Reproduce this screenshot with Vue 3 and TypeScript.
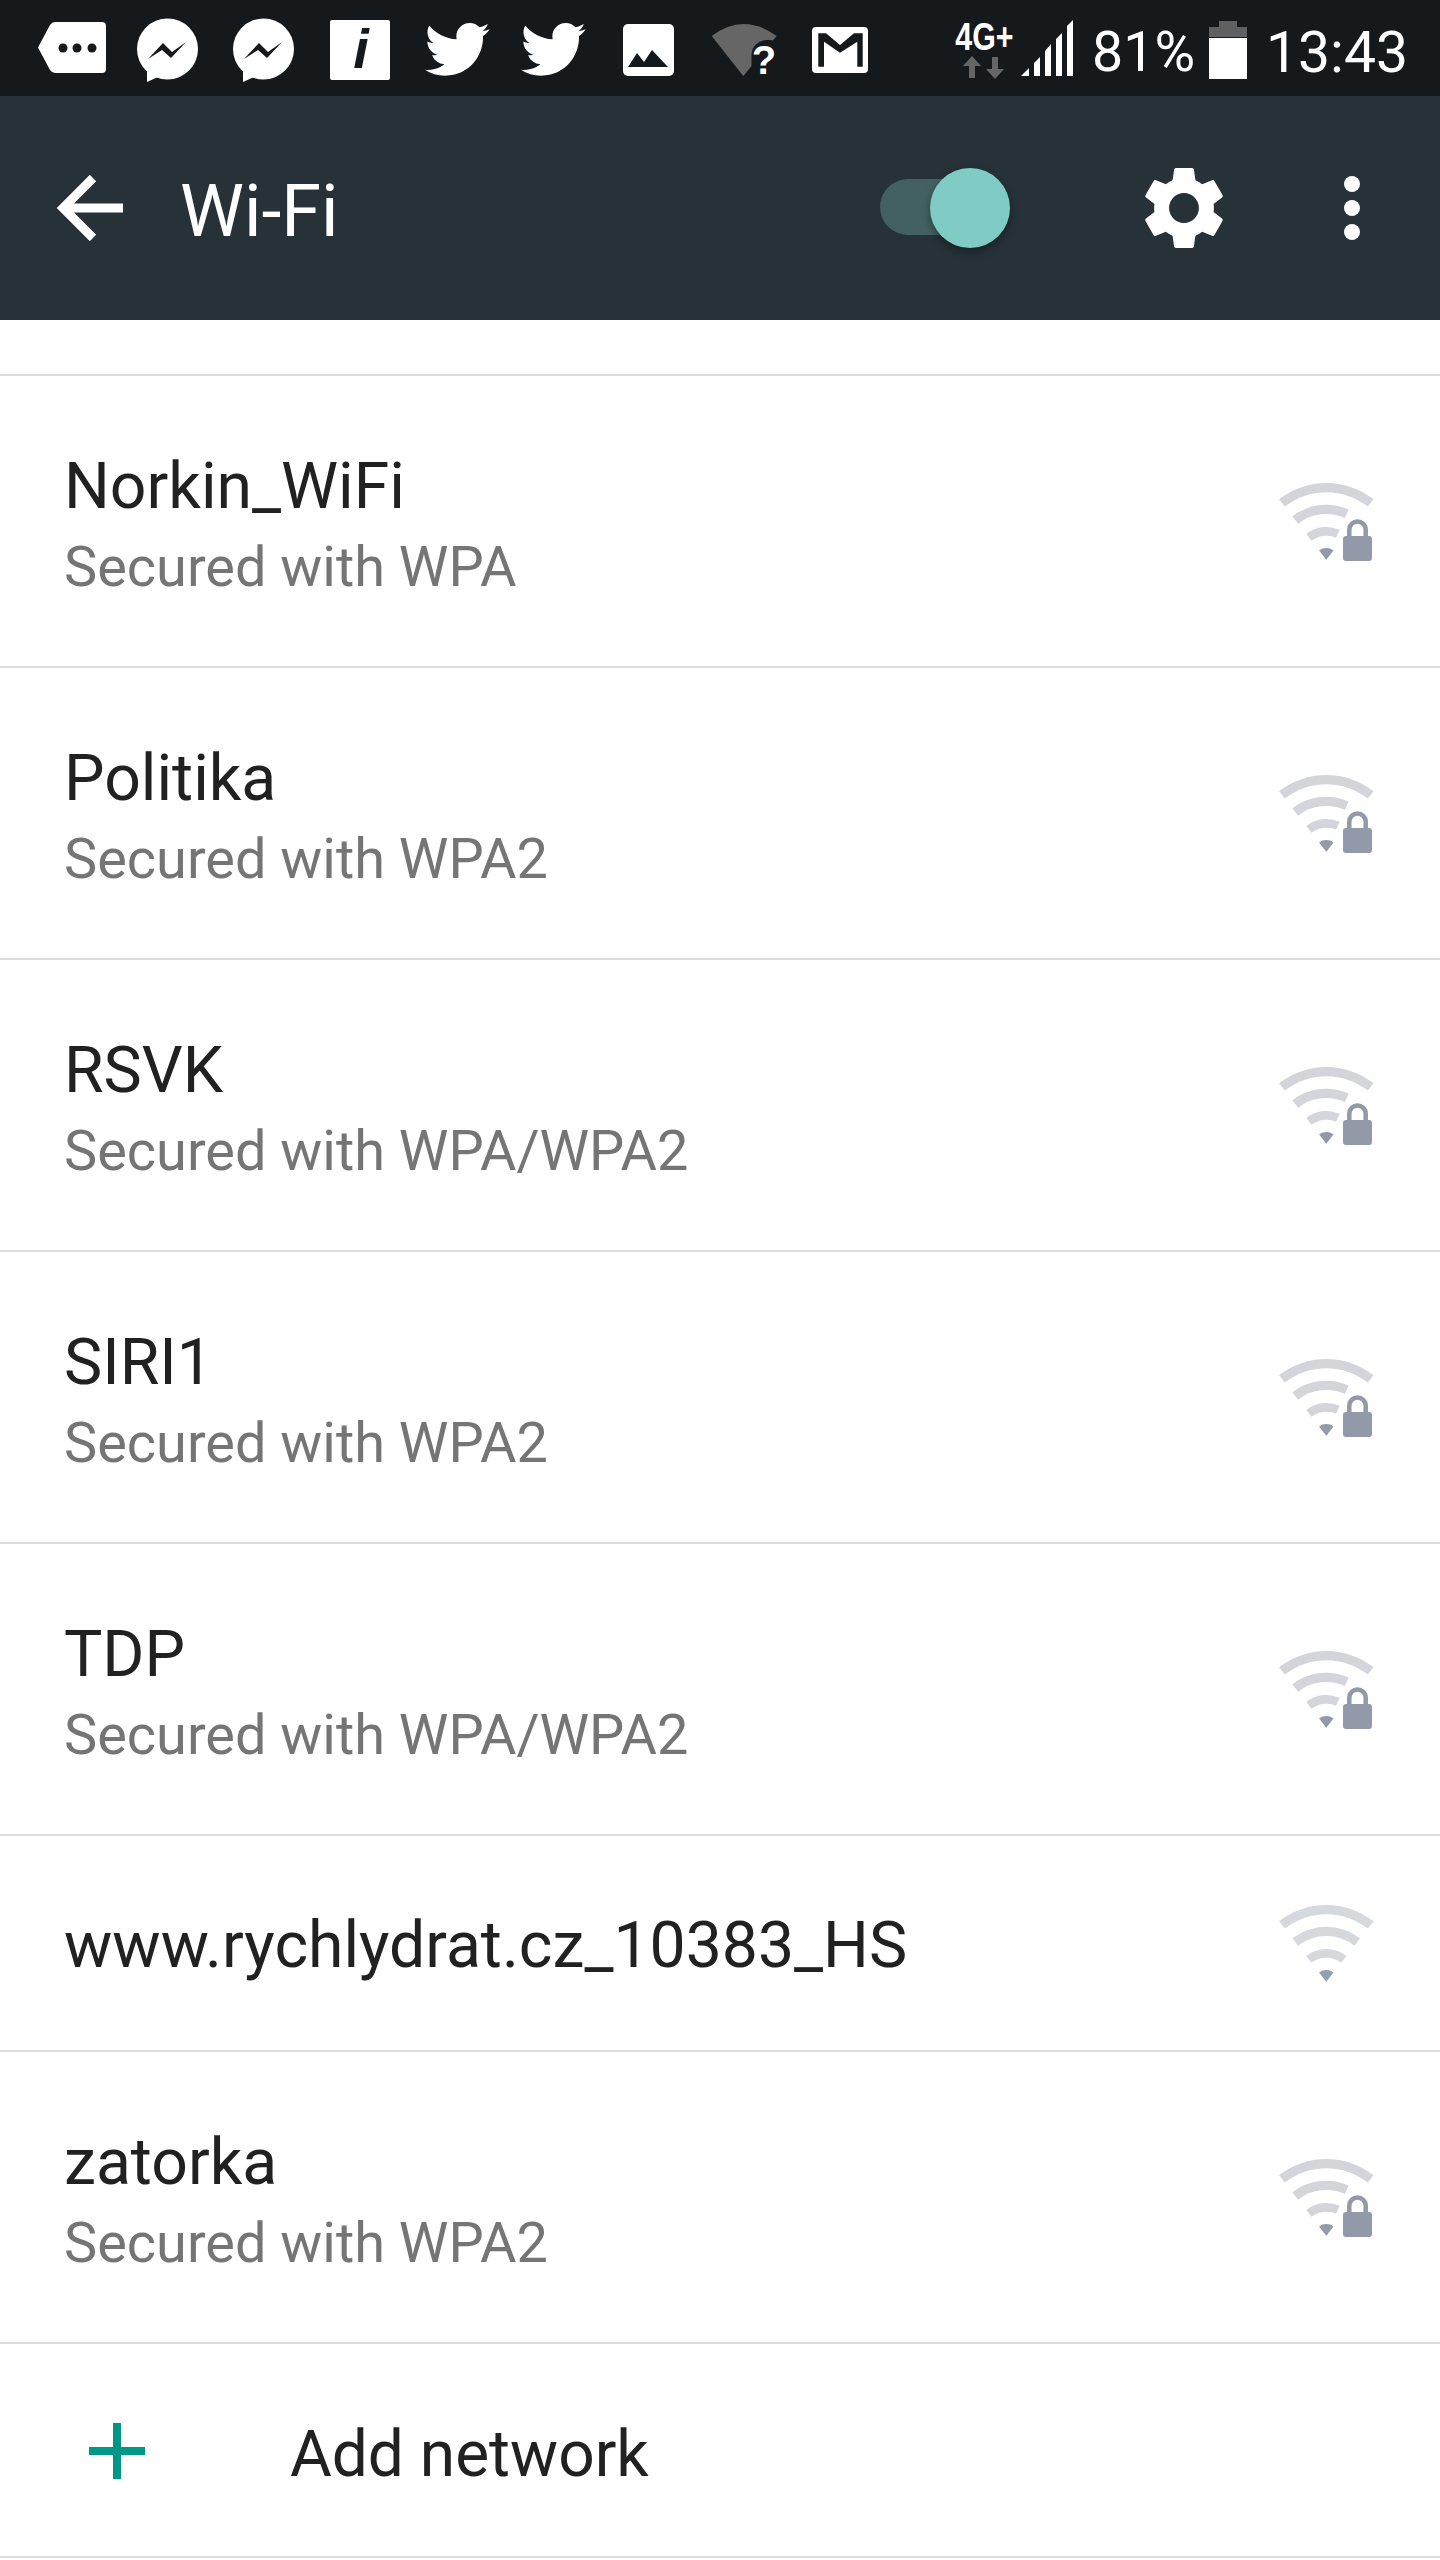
<template>
  <div class="screen">
    <div class="status-bar">
      <div class="notifications">
        <svg class="cell" viewBox="0 0 96 96">
          <path fill="#fff" d="M31 22H78q4 0 4 4V69q0 4-4 4H31q-3 0-5-3L14 47.5 26 25q2-3 5-3z" />
          <circle cx="39" cy="48" r="4.5" :fill="barColor" />
          <circle cx="53" cy="48" r="4.5" :fill="barColor" />
          <circle cx="68" cy="48" r="4.5" :fill="barColor" />
        </svg>
        <svg v-for="n in 2" :key="'m' + n" class="cell" viewBox="0 0 96 96">
          <circle cx="47.5" cy="49" r="30.5" fill="#fff" />
          <path fill="#fff" d="M27 68V82L38 77z" />
          <path :fill="barColor" d="M28 59 43 43 52 52 66 42 51 58 42 50z" />
        </svg>
        <svg class="cell" viewBox="0 0 96 96">
          <rect x="18" y="20" width="60" height="60" rx="2" fill="#fff" />
          <text x="49" y="68" text-anchor="middle" class="info-glyph" :fill="barColor">i</text>
        </svg>
        <svg v-for="n in 2" :key="'t' + n" class="cell" viewBox="0 0 96 96">
          <path fill="#fff" transform="translate(12 10.6) scale(3.1)" :d="twitterPath" />
        </svg>
        <svg class="cell" viewBox="0 0 96 96">
          <rect x="23" y="24" width="51" height="52" rx="5" fill="#fff" />
          <path :fill="barColor" d="M28 67 37 53 44 62 52 50 68 67z" />
        </svg>
        <svg class="cell" viewBox="0 0 96 96">
          <path fill="#666" d="M15.7 36Q47.3 12 80.7 36L47.3 76z" />
          <rect x="55.5" y="40" width="32" height="42" rx="15" :fill="barColor" />
          <text x="68" y="74" text-anchor="middle" class="question">?</text>
        </svg>
        <svg class="cell" viewBox="0 0 96 96">
          <rect x="20" y="27" width="56" height="46" rx="4" fill="#fff" />
          <path :fill="barColor" d="M26.3 33.3H34L48 45 62 33.3H70.7V66.7H65.3V41.7L48 52.7 32 41.7V66.7H26.3z" />
        </svg>
      </div>

      <div class="system">
        <div class="network-type">
          <span class="lte">4G+</span>
          <svg class="arrows" width="42" height="23" viewBox="0 0 42 23">
            <path fill="#666" d="M9 0 18 10H12V22H6V10H0z" />
            <path fill="#666" d="M32 23 23 13H29V1H35V13H41z" />
          </svg>
        </div>
        <svg class="signal" width="52" height="56" viewBox="0 0 52 56">
          <path fill="#fff" d="M0 56 8 48V56z" />
          <path fill="#fff" d="M13 43 19 37V56H13z" />
          <path fill="#fff" d="M24 31 30 24V56H24z" />
          <path fill="#fff" d="M35 19 41 13V56H35z" />
          <path fill="#fff" d="M46 6 52 0V56H46z" />
        </svg>
        <span class="status-text percent">81%</span>
        <svg class="battery" width="38" height="58" viewBox="0 0 38 58">
          <path fill="#5e6062" d="M10 0H28V6H38V16H0V6H10z" />
          <rect y="17" width="38" height="41" fill="#fff" />
        </svg>
        <span class="status-text clock">13:43</span>
      </div>
    </div>

    <div class="toolbar">
      <svg class="back" width="66" height="66" viewBox="0 0 66 66">
        <path d="M66 33H6M36 3 6 33 36 63" fill="none" stroke="#fff" stroke-width="9" />
      </svg>
      <h1 class="title">Wi-Fi</h1>
      <div class="toggle">
        <div class="track"></div>
        <div class="thumb"></div>
      </div>
      <svg class="gear" width="78" height="80" viewBox="2.6 2.4 18.8 19.2" preserveAspectRatio="none">
        <path fill="#fff" :d="gearPath" />
      </svg>
      <div class="more">
        <span v-for="n in 3" :key="n" class="dot"></span>
      </div>
    </div>

    <div class="list">
      <div v-for="item in networks" :key="item.name" class="row" :class="{ compact: !item.security }">
        <div class="texts">
          <div class="name">{{ item.name }}</div>
          <div v-if="item.security" class="security">{{ item.security }}</div>
        </div>
        <svg class="wifi" width="95" height="78" viewBox="0 0 95 78">
          <path
            v-for="(d, i) in item.security ? lockedArcs : openArcs"
            :key="i"
            :d="d"
            :fill="item.security ? '#d3d5da' : '#d5d8dc'"
          />
          <path :d="wedge" :fill="item.security ? '#9299a8' : '#93a0ae'" />
          <template v-if="item.security">
            <path d="M70.3 55V46.7a8.2 8.2 0 0 1 16.4 0V55" fill="none" stroke="#9299a8" stroke-width="4.5" />
            <rect x="64" y="53" width="29" height="25" rx="3" fill="#9299a8" />
          </template>
        </svg>
      </div>
      <div class="row add">
        <svg class="plus" width="56" height="56" viewBox="0 0 56 56">
          <path fill="#009688" d="M24 0H32V24H56V32H32V56H24V32H0V24H24z" />
        </svg>
        <div class="name">Add network</div>
      </div>
    </div>
  </div>
</template>

<script setup lang="ts">
interface WifiNetwork {
  name: string
  security?: string
}

const barColor = '#15191c'

const networks: WifiNetwork[] = [
  { name: 'Norkin_WiFi', security: 'Secured with WPA' },
  { name: 'Politika', security: 'Secured with WPA2' },
  { name: 'RSVK', security: 'Secured with WPA/WPA2' },
  { name: 'SIRI1', security: 'Secured with WPA2' },
  { name: 'TDP', security: 'Secured with WPA/WPA2' },
  { name: 'www.rychlydrat.cz_10383_HS' },
  { name: 'zatorka', security: 'Secured with WPA2' },
]

const cx = 47.3
const cy = 76.7

// ring segment around the tip of the wifi fan, angles measured from straight up
function arc(outer: number, inner: number, left: number, right: number): string {
  const pt = (r: number, deg: number) => {
    const a = (deg * Math.PI) / 180
    return `${(cx + r * Math.sin(a)).toFixed(2)} ${(cy - r * Math.cos(a)).toFixed(2)}`
  }
  return (
    `M${pt(outer, -left)}A${outer} ${outer} 0 0 1 ${pt(outer, right)}` +
    `L${pt(inner, right)}A${inner} ${inner} 0 0 0 ${pt(inner, -left)}Z`
  )
}

const openArcs = [arc(76.7, 67.4, 38, 38), arc(55, 45.7, 38, 38), arc(32.7, 24, 38, 38)]
const lockedArcs = [arc(76.7, 67.4, 38, 38), arc(55, 45.7, 38, 24), arc(32.7, 24, 38, 24)]
const wedge = arc(11.7, 0.01, 38, 38)

const twitterPath =
  'M22.46 6c-.77.35-1.6.58-2.46.69.88-.53 1.56-1.37 1.88-2.38-.83.5-1.75.85-2.72 1.05C18.37 4.5 17.26 4 16 4c-2.35 0-4.27 1.92-4.27 4.29 0 .34.04.67.11.98C8.28 9.09 5.11 7.38 3 4.79c-.37.63-.58 1.37-.58 2.15 0 1.49.75 2.81 1.91 3.56-.71 0-1.37-.2-1.95-.5v.03c0 2.08 1.48 3.82 3.44 4.21a4.22 4.22 0 0 1-1.93.07 4.28 4.28 0 0 0 4 2.98 8.521 8.521 0 0 1-5.33 1.84c-.34 0-.68-.02-1.02-.06C3.44 20.29 5.7 21 8.12 21 16 21 20.33 14.46 20.33 8.79c0-.19 0-.37-.01-.56.84-.6 1.56-1.36 2.14-2.23z'

const gearPath =
  'M19.14 12.94c.04-.3.06-.61.06-.94 0-.32-.02-.64-.07-.94l2.03-1.58c.18-.14.23-.41.12-.61l-1.92-3.32c-.12-.22-.37-.29-.59-.22l-2.39.96c-.5-.38-1.03-.7-1.62-.94L14.4 2.81c-.04-.24-.24-.41-.48-.41h-3.84c-.24 0-.43.17-.47.41L9.25 5.35c-.59.24-1.13.57-1.62.94L5.24 5.33c-.22-.08-.47 0-.59.22L2.74 8.87c-.12.21-.08.47.12.61l2.03 1.58c-.05.3-.09.63-.09.94s.02.64.07.94l-2.03 1.58c-.18.14-.23.41-.12.61l1.92 3.32c.12.22.37.29.59.22l2.39-.96c.5.38 1.03.7 1.62.94l.36 2.54c.05.24.24.41.48.41h3.84c.24 0 .44-.17.47-.41l.36-2.54c.59-.24 1.13-.56 1.62-.94l2.39.96c.22.08.47 0 .59-.22l1.92-3.32c.12-.22.07-.47-.12-.61l-2.03-1.58zM12 15.6c-1.98 0-3.6-1.62-3.6-3.6s1.62-3.6 3.6-3.6 3.6 1.62 3.6 3.6-1.62 3.6-3.6 3.6z'
</script>

<style scoped>
.screen {
  width: 1440px;
  height: 2560px;
  background: #fff;
  font-family: Roboto, "Liberation Sans", sans-serif;
  overflow: hidden;
}

.status-bar {
  height: 96px;
  background: #15191c;
  display: flex;
  justify-content: space-between;
  align-items: center;
  padding: 0 32px 0 24px;
  box-sizing: border-box;
}

.notifications {
  display: flex;
}

.cell {
  width: 96px;
  height: 96px;
  display: block;
}

.info-glyph {
  font-family: "Liberation Sans", sans-serif;
  font-weight: 700;
  font-style: italic;
  font-size: 56px;
}

.question {
  font-family: "Liberation Sans", sans-serif;
  font-weight: 700;
  font-size: 40px;
  fill: #fff;
}

.system {
  display: flex;
  align-items: center;
}

.network-type {
  width: 58px;
  height: 56px;
  display: flex;
  flex-direction: column;
  align-items: center;
  justify-content: space-between;
  margin-top: 6px;
}

.lte {
  font-family: "Liberation Sans", sans-serif;
  font-weight: 700;
  font-size: 38px;
  line-height: 28px;
  white-space: nowrap;
  transform: scaleX(0.8);
  color: #fff;
}

.signal {
  margin-left: 8px;
}

.status-text {
  font-weight: 400;
  line-height: 86px;
  padding-top: 10px;
  color: #fff;
}

.percent {
  margin-left: 19px;
  font-size: 55.5px;
}

.battery {
  margin-left: 14px;
  margin-top: 4px;
}

.clock {
  margin-left: 19px;
  font-size: 57px;
}

.toolbar {
  height: 224px;
  background: #263238;
  display: flex;
  align-items: center;
}

.back {
  margin-left: 57px;
}

.title {
  margin: 7px 0 0 57px;
  font-weight: 400;
  font-size: 72px;
  line-height: 84px;
  color: #fff;
}

.toggle {
  position: relative;
  width: 130px;
  height: 80px;
  margin-left: auto;
}

.track {
  position: absolute;
  left: 0;
  top: 11px;
  width: 110px;
  height: 56px;
  border-radius: 28px;
  background: #426160;
}

.thumb {
  position: absolute;
  left: 50px;
  top: 0;
  width: 80px;
  height: 80px;
  border-radius: 50%;
  background: #80cbc4;
  box-shadow: 0 4px 8px rgba(0, 0, 0, 0.35);
}

.gear {
  margin-left: 135px;
}

.more {
  width: 16px;
  margin: 0 80px 0 121px;
  display: flex;
  flex-direction: column;
  gap: 8px;
}

.dot {
  width: 16px;
  height: 16px;
  border-radius: 50%;
  background: #fff;
}

.list {
  padding-top: 54px;
  border-bottom: 2px solid #dcdcdc;
  width: 100%;
}

.row {
  height: 292px;
  box-sizing: border-box;
  border-top: 2px solid #dcdcdc;
  display: flex;
  align-items: center;
  justify-content: space-between;
  padding: 0 65px 0 64px;
}

.row.compact {
  height: 216px;
}

.row.add {
  height: 214px;
  justify-content: flex-start;
  padding-left: 89px;
}

.texts {
  padding-top: 3px;
}

.name {
  font-size: 64.3px;
  line-height: 80px;
  color: #212121;
}

.add .name {
  padding-top: 10px;
  font-size: 64px;
}

.security {
  margin-top: 8px;
  font-size: 55.9px;
  line-height: 66px;
  color: #757575;
}

.wifi {
  margin: 2px 1px 0 0;
}

.plus {
  margin: 2px 145px 0 0;
}
</style>
